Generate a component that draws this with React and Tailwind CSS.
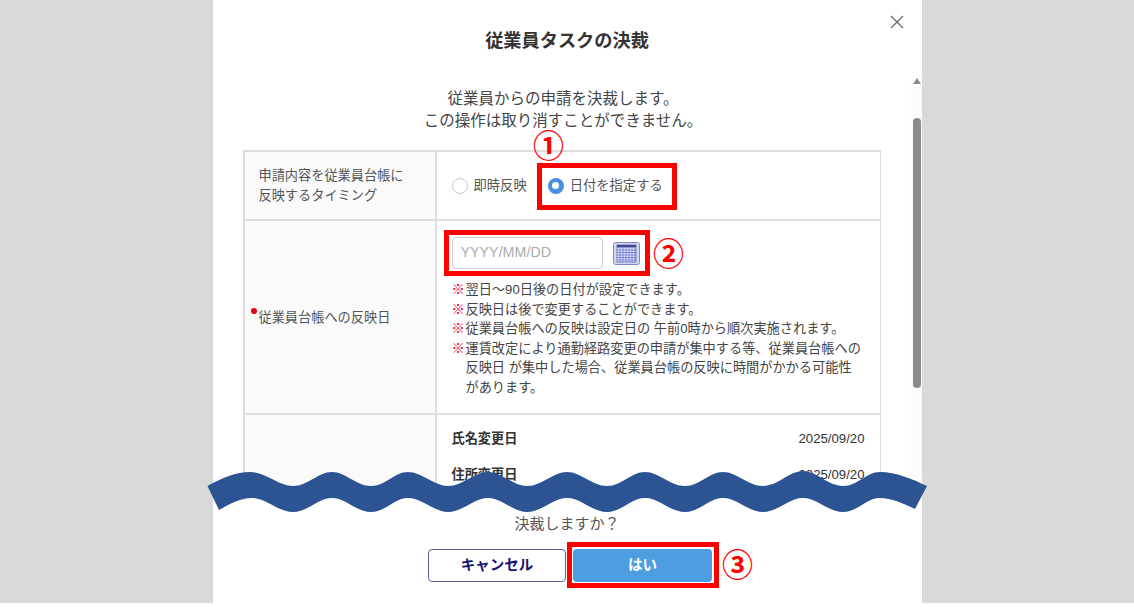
import React from 'react';

const jp = 'font-["Liberation_Sans","Noto_Sans_CJK_JP",sans-serif]';

const notes = [
  <>翌日～90日後の日付が設定できます。</>,
  <>反映日は後で変更することができます。</>,
  <>従業員台帳への反映は設定日の 午前0時から順次実施されます。</>,
  <>
    運賃改定により通勤経路変更の申請が集中する等、従業員台帳への
    <br />
    反映日 が集中した場合、従業員台帳の反映に時間がかかる可能性
    <br />
    があります。
  </>,
];

function CalendarIcon() {
  return (
    <svg width="27" height="23" viewBox="0 0 27 23">
      <rect x="0.5" y="0.5" width="26" height="22" rx="2" fill="#d3d8ee" stroke="#8088c0" />
      <rect x="4" y="3" width="19" height="17" fill="#eceef9" stroke="#5a64a4" strokeWidth="0.8" />
      <rect x="4" y="3" width="19" height="2.5" fill="#3f4a8f" />
      <path
        d="M7 5.5V20M10 5.5V20M13 5.5V20M16 5.5V20M19 5.5V20M22 5.5V20M4 8H23M4 10.5H23M4 13H23M4 15.5H23M4 18H23"
        stroke="#7683dc"
        strokeWidth="1"
        fill="none"
      />
    </svg>
  );
}

function Radio({ checked, label }) {
  return (
    <div className="flex items-center gap-[6px]">
      {checked ? (
        <span className="flex h-[16px] w-[16px] items-center justify-center rounded-full bg-[#4a90e2]">
          <span className="h-[7px] w-[7px] rounded-full bg-white" />
        </span>
      ) : (
        <span className="h-[16px] w-[16px] rounded-full border border-[#c8c8c8] bg-white" />
      )}
      <span className="text-[13.3px] text-[#555]">{label}</span>
    </div>
  );
}

function Wave() {
  return (
    <svg className="absolute left-[200px] top-[465px]" width="734" height="54" viewBox="200 465 734 54">
      <path
        fill="#2c5492"
        d="M207.5 486 C222 478 236 472 250 472 C266 472 278 486 293 486 C308 486 318 472 332 472 C346 472 356 486 371 486 C386 486 394 472 408 472 C422 472 434 486 448 486 C463 486 474 472 488 472 C502 472 513 486 527 486 C542 486 553 472 567 472 C581 472 592 486 607 486 C622 486 631 472 645 472 C659 472 670 486 685 486 C700 486 709 472 723 472 C737 472 748 486 763 486 C778 486 789 471 803 471 C817 471 828 486 843 486 C858 486 866 472 880 472 C896 472 912 479 927 486 L915 509 C902 503 892 498 880 498 C866 498 858 512 843 512 C828 512 817 498 803 498 C789 498 778 512 763 512 C748 512 737 498 723 498 C709 498 700 512 685 512 C670 512 659 498 645 498 C631 498 622 512 607 512 C592 512 581 498 567 498 C553 498 542 512 527 512 C513 512 502 498 488 498 C474 498 463 512 448 512 C434 512 422 498 408 498 C394 498 386 512 371 512 C356 512 346 498 332 498 C318 498 308 512 293 512 C278 512 266 498 252 498 C240 498 230 504 219 510 Z"
      />
    </svg>
  );
}

export default function App() {
  return (
    <div className={`relative h-[607px] w-full overflow-hidden bg-white ${jp}`}>
      <div className="flex h-[603px] justify-center bg-[#d9d9d9]">
        <div className="relative flex h-full w-[709px] flex-col bg-white">
          <button className="absolute right-[18px] top-[15px] text-[#666]">
            <svg width="14" height="14" viewBox="0 0 14 14" fill="none" stroke="#6b6b6b" strokeWidth="1.3">
              <path d="M1 1 13 13M13 1 1 13" />
            </svg>
          </button>

          <div className="flex h-[78px] shrink-0 items-start justify-center pt-[28px]">
            <h1 className="text-[18.2px] font-bold leading-[26px] text-[#333]">従業員タスクの決裁</h1>
          </div>

          <div className="flex h-[422px] shrink-0 overflow-hidden">
            <div className="w-[698px] shrink-0 pl-[30px]">
              <div className="mt-[10px] mb-[18px] pr-[27px] text-center text-[15.5px] leading-[22px] text-[#444]">
                <p>従業員からの申請を決裁します。</p>
                <p>この操作は取り消すことができません。</p>
              </div>

              <div className="w-[638px] border-l-2 border-r border-t-2 border-[#dcdcdc]">
                <div className="flex h-[69px] border-b-2 border-[#dedede]">
                  <div className="flex w-[192px] shrink-0 items-center border-r-2 border-[#dedede] bg-[#fafafa] pl-[14px] text-[13.2px] leading-[20px] text-[#555]">
                    <p>
                      申請内容を従業員台帳に
                      <br />
                      反映するタイミング
                    </p>
                  </div>
                  <div className="flex items-center gap-[21px] pl-[15px]">
                    <Radio label="即時反映" />
                    <Radio checked label="日付を指定する" />
                  </div>
                </div>

                <div className="flex h-[194px] border-b-2 border-[#dedede]">
                  <div className="relative flex w-[192px] shrink-0 items-center border-r-2 border-[#dedede] bg-[#fafafa] pl-[14px] text-[13.2px] text-[#555]">
                    <span className="absolute left-[6px] top-[87px] h-[6px] w-[6px] rounded-full bg-[#e60012]" />
                    <p className="mt-[1px]">従業員台帳への反映日</p>
                  </div>
                  <div className="pl-[15px] pt-[16px]">
                    <div className="flex items-center gap-[10px]">
                      <div className="flex h-[32px] w-[151px] items-center rounded-[4px] border border-[#cfcfcf] bg-white pl-[8px] text-[14.3px] text-[#aaa]">
                        YYYY/MM/DD
                      </div>
                      <CalendarIcon />
                    </div>
                    <ul className="mt-[11px] text-[13.2px] leading-[19.6px] text-[#444]">
                      {notes.map((note, i) => (
                        <li key={i} className="flex">
                          <span className="w-[14px] shrink-0 font-bold text-[#e60012]">※</span>
                          <span className="whitespace-nowrap">{note}</span>
                        </li>
                      ))}
                    </ul>
                  </div>
                </div>

                <div className="flex h-[120px]">
                  <div className="w-[192px] shrink-0 border-r-2 border-[#dedede] bg-[#fafafa]" />
                  <div className="flex flex-1 flex-col gap-[16px] pl-[15px] pr-[15px] pt-[14px] text-[13.2px] leading-[20px] text-[#333]">
                    <div className="flex justify-between">
                      <span className="font-bold">氏名変更日</span>
                      <span>2025/09/20</span>
                    </div>
                    <div className="flex justify-between">
                      <span className="font-bold">住所変更日</span>
                      <span>2025/09/20</span>
                    </div>
                  </div>
                </div>
              </div>
            </div>

            <div className="flex h-[400px] w-[11px] shrink-0 flex-col items-center bg-[#fbfbfb] pl-[1px]">
              <span className="h-0 w-0 border-x-[4px] border-b-[6px] border-x-transparent border-b-[#8a8a8a]" />
              <span className="mt-[34px] h-[270px] w-[8px] rounded-full bg-[#8a8a8a]" />
            </div>
          </div>

          <div className="flex flex-1 flex-col items-center pt-[14px]">
            <p className="text-[15px] leading-[20px] text-[#555]">決裁しますか？</p>
            <div className="ml-[6px] mt-[15px] flex gap-[7px]">
              <button className="h-[33px] w-[138px] rounded-[4px] border border-[#5b5ba0] bg-white text-[14.5px] font-bold text-[#14146e]">
                キャンセル
              </button>
              <button className="h-[33px] w-[139px] rounded-[4px] bg-[#4d9de0] text-[14.5px] font-bold text-white">
                はい
              </button>
            </div>
          </div>
        </div>
      </div>

      <Wave />

      <div className="absolute left-[537px] top-[163px] h-[47px] w-[140px] border-[5px] border-[#ff0000]" />
      <div className="absolute left-[444px] top-[230px] h-[46px] w-[206px] border-[5px] border-[#ff0000]" />
      <div className="absolute left-[567px] top-[542px] h-[46px] w-[152px] border-[5px] border-[#ff0000]" />

      <span className="absolute left-[533px] top-[127px] text-[31px] font-bold leading-[40px] text-[#ff0000]">①</span>
      <span className="absolute left-[653px] top-[235px] text-[31px] font-bold leading-[40px] text-[#ff0000]">②</span>
      <span className="absolute left-[722px] top-[546px] text-[31px] font-bold leading-[40px] text-[#ff0000]">③</span>
    </div>
  );
}
